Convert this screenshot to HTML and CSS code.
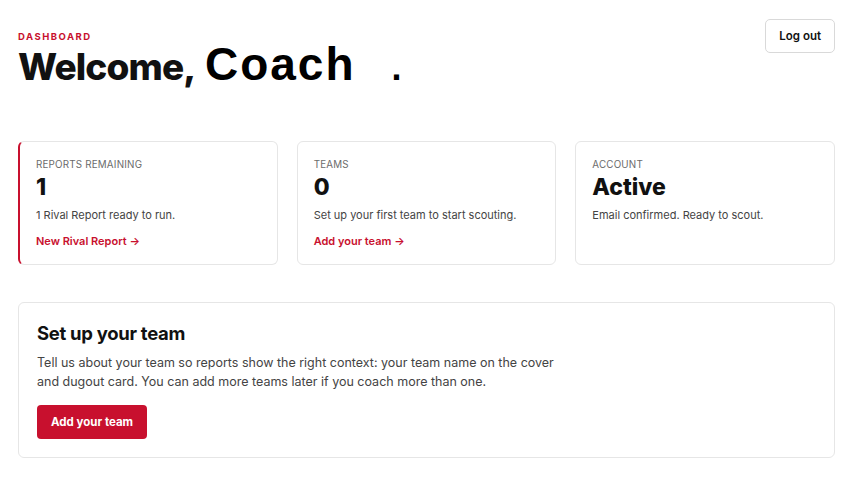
FILE: index.html
```html
<!DOCTYPE html>
<html lang="en">
<head>
    <meta charset="UTF-8">
    <meta name="viewport" content="width=device-width, initial-scale=1.0">
    <title>Dashboard</title>
    <link rel="stylesheet" href="styles.css">
</head>
<body>
    <header class="top">
        <div>
            <div class="eyebrow">Dashboard</div>
            <h1>Welcome, <span class="name">Coach</span><span class="dot">.</span></h1>
        </div>
        <button class="logout">Log out</button>
    </header>

    <!-- Статистика -->
    <div class="stats">
        <div class="card accent">
            <div class="label">Reports remaining</div>
            <div class="value">1</div>
            <p class="desc">1 Rival Report ready to run.</p>
            <a class="link" href="#">New Rival Report →</a>
        </div>
        <div class="card">
            <div class="label">Teams</div>
            <div class="value">0</div>
            <p class="desc">Set up your first team to start scouting.</p>
            <a class="link" href="#">Add your team →</a>
        </div>
        <div class="card">
            <div class="label">Account</div>
            <div class="value">Active</div>
            <p class="desc">Email confirmed. Ready to scout.</p>
        </div>
    </div>

    <!-- Команда -->
    <section class="setup">
        <h2>Set up your team</h2>
        <p>Tell us about your team so reports show the right context: your team name on the cover and dugout card. You can add more teams later if you coach more than one.</p>
        <button class="primary">Add your team</button>
    </section>
</body>
</html>
```

FILE: styles.css
```css
body {
    margin: 0;
    padding: 19px 27px 0 18px;
    font-family: Inter, "Liberation Sans", sans-serif;
    background-color: #fff;
    color: #111;
}
.top {
    display: flex;
    justify-content: space-between;
    align-items: flex-start;
}
.eyebrow {
    margin-top: 12px;
    font-size: 9.5px;
    font-weight: 700;
    letter-spacing: 1.5px;
    text-transform: uppercase;
    color: #c8102e;
}
h1 {
    margin: 0;
    font-size: 37px;
    font-weight: 800;
    letter-spacing: -0.9px;
    line-height: 44px;
    color: #111;
}
.name {
    margin-left: 4px;
    font-family: "Liberation Sans", Arial, sans-serif;
    font-size: 46px;
    font-weight: 700;
    letter-spacing: 2px;
    color: #000;
}
.dot {
    margin-left: 36px;
    font-family: "Liberation Sans", Arial, sans-serif;
    font-size: 36px;
    font-weight: 700;
    color: #000;
}
.logout {
    padding: 0 13px;
    height: 34px;
    background: #fff;
    border: 1px solid #d9d9d9;
    border-radius: 5px;
    font-family: Inter, sans-serif;
    font-size: 11.5px;
    font-weight: 600;
    color: #111;
    cursor: pointer;
}
.stats {
    display: grid;
    grid-template-columns: repeat(3, 1fr);
    gap: 19px;
    margin-top: 51px;
}
.card {
    border: 1px solid #e6e6e6;
    border-radius: 6px;
    padding: 17px 16px 13px;
    min-height: 92px;
}
.card.accent {
    border-left: 2px solid #c8102e;
}
.label {
    font-size: 9.8px;
    letter-spacing: 0.2px;
    text-transform: uppercase;
    color: #6b6b6b;
}
.value {
    margin-top: 2px;
    font-size: 23px;
    font-weight: 800;
    line-height: 30px;
}
.desc {
    margin: 6px 0 0;
    font-size: 11px;
    color: #444;
}
.link {
    display: inline-block;
    margin-top: 12px;
    font-size: 11px;
    font-weight: 600;
    color: #c8102e;
    text-decoration: none;
}
.setup {
    margin-top: 37px;
    border: 1px solid #e6e6e6;
    border-radius: 6px;
    padding: 19px 18px 18px;
}
.setup h2 {
    margin: 0;
    font-size: 18.5px;
    font-weight: 700;
    letter-spacing: -0.3px;
}
.setup p {
    margin: 9px 0 14px;
    max-width: 540px;
    font-size: 12.5px;
    line-height: 19px;
    color: #444;
}
.primary {
    padding: 0 14px;
    height: 34px;
    background-color: #c8102e;
    color: #fff;
    border: none;
    border-radius: 4px;
    font-family: Inter, sans-serif;
    font-size: 11.5px;
    font-weight: 700;
    cursor: pointer;
}
```
